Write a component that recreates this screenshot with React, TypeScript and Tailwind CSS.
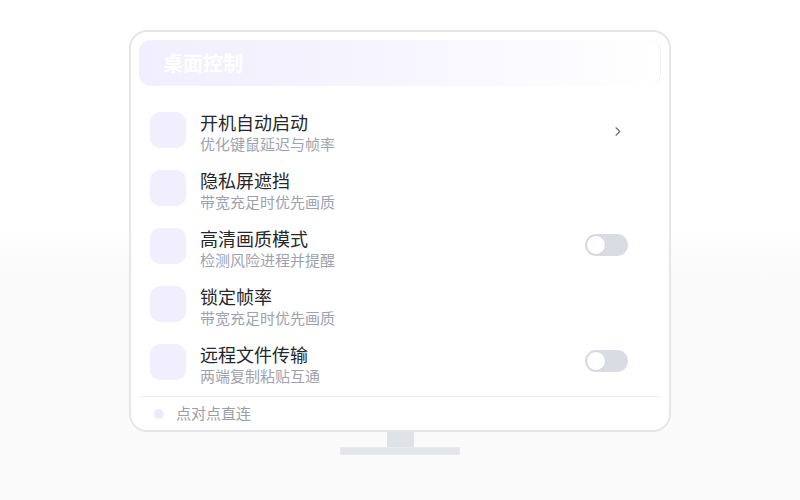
import React from 'react';

type Item = { title: string; desc: string; action?: 'chevron' | 'toggle' };

const items: Item[] = [
  { title: '开机自动启动', desc: '优化键鼠延迟与帧率', action: 'chevron' },
  { title: '隐私屏遮挡', desc: '带宽充足时优先画质' },
  { title: '高清画质模式', desc: '检测风险进程并提醒', action: 'toggle' },
  { title: '锁定帧率', desc: '带宽充足时优先画质' },
  { title: '远程文件传输', desc: '两端复制粘贴互通', action: 'toggle' },
];

const font = { fontFamily: '"Noto Sans CJK SC", "Noto Sans", sans-serif' };

const Toggle = () => (
  <div className="mt-[6px] w-[43px] h-[22px] rounded-full bg-[#d9dce2] p-[1px] flex items-center">
    <div className="w-[20px] h-[20px] rounded-full bg-white border border-[#d1d5db]" />
  </div>
);

const Chevron = () => (
  <svg className="mt-[15px] mr-[7px]" width="6" height="9" viewBox="0 0 6 9" fill="none">
    <path d="M1 0.8 L4.8 4.5 L1 8.2" stroke="#6b7280" strokeWidth="1.2" strokeLinecap="round" strokeLinejoin="round" />
  </svg>
);

export default function App() {
  return (
    <div
      className="w-[800px] h-[500px] bg-gradient-to-b from-white from-45% to-[#fafafa] to-55% flex flex-col items-center pt-[30px]"
      style={font}
    >
      <div className="w-[542px] rounded-[18px] border-2 border-[#e4e6ea] bg-white px-[8px] pt-[8px]">
        <div className="h-[46px] rounded-[12px] bg-gradient-to-r from-[#f1eefe] via-[#f7f5ff] to-white flex items-center pl-[24px] border-r border-[#f1f1f4]">
          <span className="text-[20px] font-bold text-white leading-none">桌面控制</span>
        </div>

        <div className="mt-[26px] flex flex-col gap-[16px] pl-[11px] pr-[33px]">
          {items.map((it) => (
            <div key={it.title} className="flex items-start h-[42px]">
              <div className="w-[36px] h-[36px] rounded-[10px] bg-[#f1eefd] shrink-0" />
              <div className="ml-[14px] -mt-[2px] flex-1 flex flex-col">
                <span className="text-[18px] leading-[24px] text-[#25272b]">{it.title}</span>
                <span className="text-[15px] leading-[20px] text-[#9ca3af]">{it.desc}</span>
              </div>
              {it.action === 'chevron' && <Chevron />}
              {it.action === 'toggle' && <Toggle />}
            </div>
          ))}
        </div>

        <div className="mt-[10px] mx-[1px] border-t border-[#eceef1]" />

        <div className="h-[33px] flex items-center pl-[15px]">
          <div className="w-[10px] h-[10px] rounded-full bg-[#eeeafd]" />
          <span className="ml-[12px] text-[15px] text-[#9a9ea6]">点对点直连</span>
        </div>
      </div>

      <div className="w-[27px] h-[15px] bg-[#dfe2e6]" />
      <div className="w-[120px] h-[8px] bg-[#e2e5e9] border border-[#e8eaed]" />
    </div>
  );
}
